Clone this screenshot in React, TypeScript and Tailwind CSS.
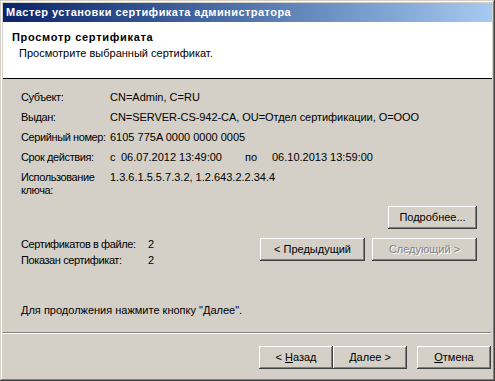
import React from "react";

const btn =
  "flex items-center justify-center h-[23px] bg-[#d4d0c8] shadow-[inset_-1px_-1px_#404040,inset_1px_1px_#ffffff,inset_-2px_-2px_#808080,inset_2px_2px_#d4d0c8]";

const lbl = "tracking-[-0.4px]";

export default function App() {
  return (
    <div
      className="w-[495px] h-[381px] bg-[#d4d0c8] p-[3px] flex flex-col text-[11px] leading-[13px] text-black shadow-[inset_-1px_-1px_#404040,inset_1px_1px_#d4d0c8,inset_-2px_-2px_#808080,inset_2px_2px_#ffffff]"
      style={{ fontFamily: '"Liberation Sans", Arial, sans-serif' }}
    >
      {/* Title bar */}
      <div className="h-[19px] flex items-center pl-[3px] bg-gradient-to-r from-[#0a246a] to-[#a6caf0]">
        <span className="text-white font-bold text-[11px] tracking-[0.45px]">
          Мастер установки сертификата администратора
        </span>
      </div>

      {/* Header */}
      <div className="h-[57px] bg-white border-b border-black pt-[9px] pl-[9px] flex flex-col gap-[3px]">
        <div className="font-bold tracking-[0.7px]">Просмотр сертификата</div>
        <div className="pl-[7px]">Просмотрите выбранный сертификат.</div>
      </div>

      {/* Body */}
      <div className="flex-1 flex flex-col pl-[18px] pr-[15px] pt-[12px]">
        <div className="grid grid-cols-[89px_1fr] gap-y-[7px] whitespace-nowrap">
          <div className={lbl}>Субъект:</div>
          <div>CN=Admin, C=RU</div>
          <div className={lbl}>Выдан:</div>
          <div className="tracking-[-0.05px]">CN=SERVER-CS-942-CA, OU=Отдел сертификации, O=OOO</div>
          <div className={lbl}>Серийный номер:</div>
          <div>6105 775A 0000 0000 0005</div>
          <div className={lbl}>Срок действия:</div>
          <div className="flex">
            <span className="w-[11px]">с</span>
            <span className="w-[124px]">06.07.2012 13:49:00</span>
            <span className="w-[27px]">по</span>
            <span>06.10.2013 13:59:00</span>
          </div>
          <div className={lbl + " whitespace-normal w-[80px]"}>Использование ключа:</div>
          <div>1.3.6.1.5.5.7.3.2, 1.2.643.2.2.34.4</div>
        </div>

        <div className="flex justify-end mt-[9px]">
          <div className={btn + " w-[89px] text-black"}>Подробнее...</div>
        </div>

        <div className="flex justify-between mt-[9px]">
          <div className="grid grid-cols-[127px_auto] gap-y-[3px] h-[29px]">
            <div className={lbl}>Сертификатов в файле:</div>
            <div>2</div>
            <div className={lbl}>Показан сертификат:</div>
            <div>2</div>
          </div>
          <div className="flex gap-[7px]">
            <div className={btn + " w-[105px] text-black"}>&lt; Предыдущий</div>
            <div className={btn + " w-[105px] text-[#808080] [text-shadow:1px_1px_0_#ffffff]"}>
              Следующий &gt;
            </div>
          </div>
        </div>

        <div className="mt-[37px]">Для продолжения нажмите кнопку "Далее".</div>
      </div>

      {/* Separator */}
      <div className="h-[2px] border-t border-[#808080] border-b border-b-white mr-[1px]" />

      {/* Footer */}
      <div className="flex justify-end pt-[12px] pb-[9px] pr-[1px]">
        <div className="flex">
          <div className={btn + " w-[74px] text-black"}>
            &lt;&nbsp;<u className="underline-offset-1">Н</u>азад
          </div>
          <div className={btn + " w-[74px] text-black"}>
            <u className="underline-offset-1">Д</u>алее &gt;
          </div>
        </div>
        <div className={btn + " w-[74px] ml-[10px] text-black"}>
          <u className="underline-offset-1">О</u>тмена
        </div>
      </div>
    </div>
  );
}
